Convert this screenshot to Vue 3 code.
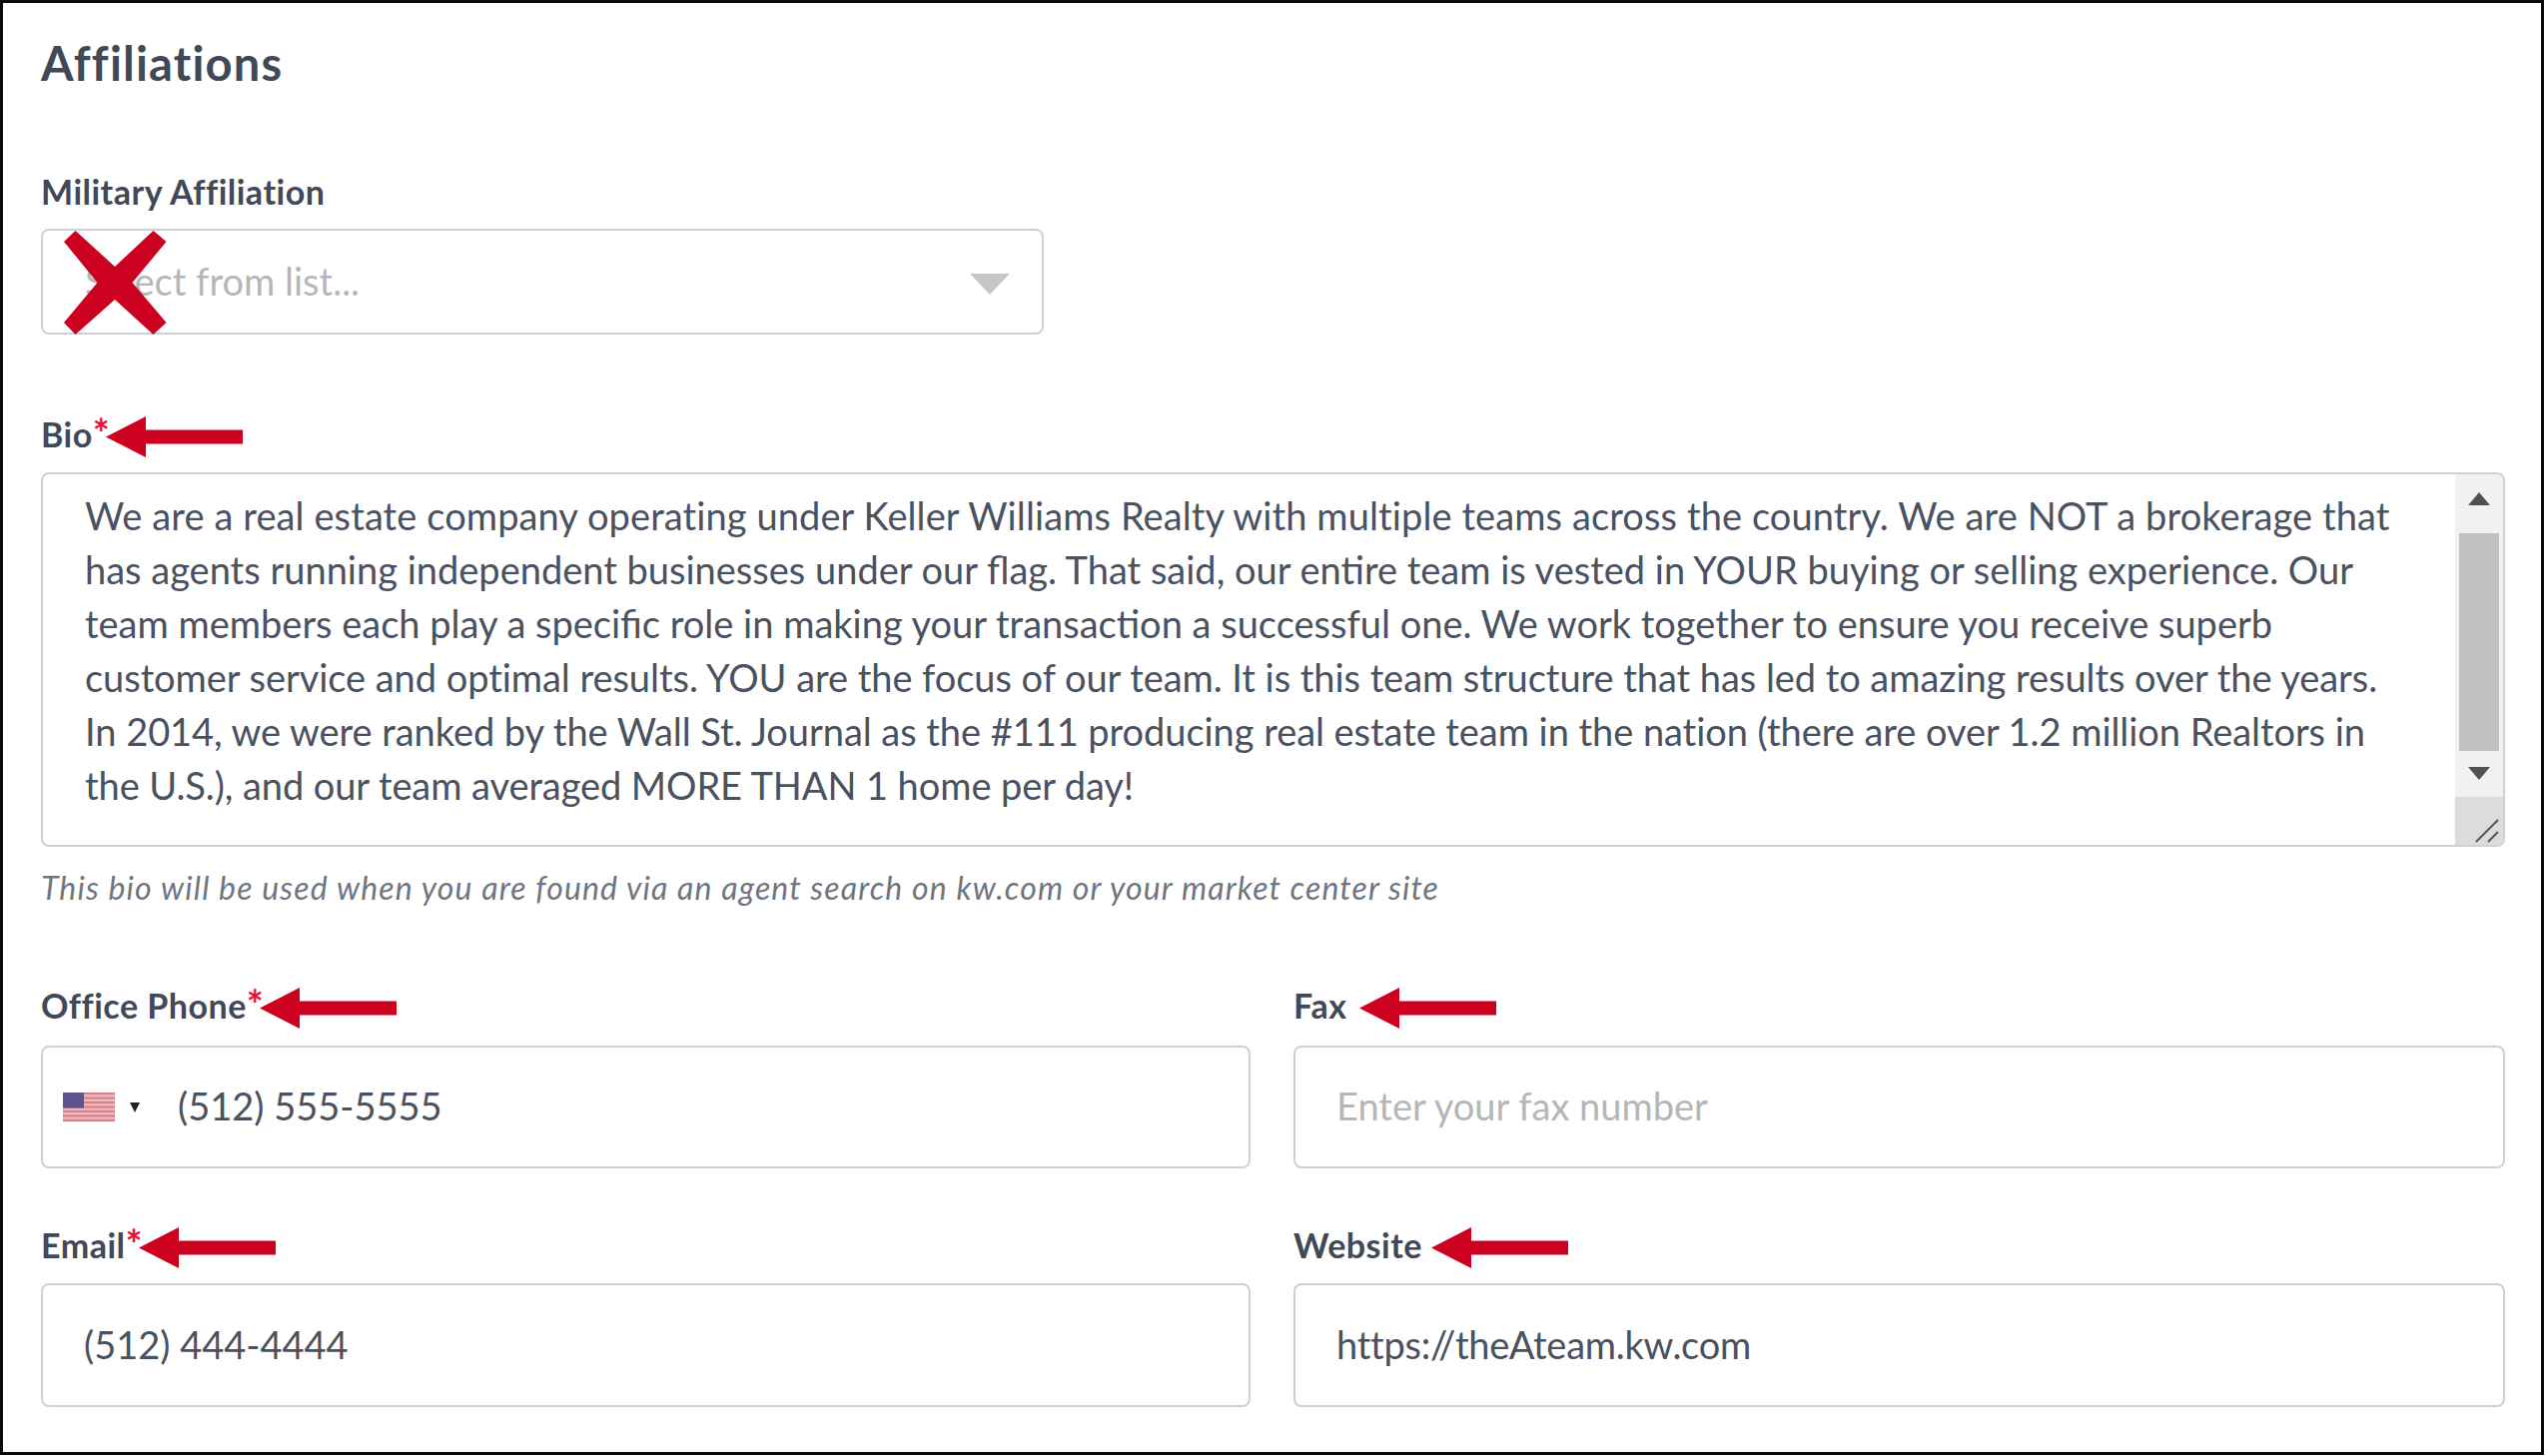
<script setup>
const bio = [
  { text: 'We are a real estate company operating under Keller Williams Realty with multiple teams across the country. We are NOT a brokerage that', ls: 0.1 },
  { text: 'has agents running independent businesses under our flag. That said, our entire team is vested in YOUR buying or selling experience. Our', ls: 0 },
  { text: 'team members each play a specific role in making your transaction a successful one. We work together to ensure you receive superb', ls: 0 },
  { text: 'customer service and optimal results. YOU are the focus of our team. It is this team structure that has led to amazing results over the years.', ls: -0.05 },
  { text: 'In 2014, we were ranked by the Wall St. Journal as the #111 producing real estate team in the nation (there are over 1.2 million Realtors in', ls: -0.05 },
  { text: 'the U.S.), and our team averaged MORE THAN 1 home per day!', ls: -0.08 }
]
const stripes = [0, 2, 4, 6, 8, 10, 12]
</script>

<template>
  <main class="page">
    <h2 class="title">Affiliations</h2>

    <section class="field military">
      <div class="label">Military Affiliation</div>
      <div class="box select">
        <span class="placeholder">Select from list...</span>
        <span class="tri"></span>
        <svg class="cross" width="103" height="104" viewBox="0 0 103 104">
          <path d="M11.500 0 L51 36 L89.500 0 L102.500 11 L68.500 52 L102.500 92 L89.500 104 L51 69 L11.500 104 L0 92 L33.500 52 L0 11 Z" fill="#cc001f" />
        </svg>
      </div>
    </section>

    <section class="field bio">
      <div class="label">
        <span>Bio</span><span class="req">*</span>
        <svg class="arrow" width="137" height="41" viewBox="0 0 137 41"><path d="M0 20.500 L40 0 V13.500 H137 V27.500 H40 V41 Z" /></svg>
      </div>
      <div class="box area">
        <div class="area-text">
          <div v-for="(line, i) in bio" :key="i" class="bio-line" :style="{ letterSpacing: line.ls + 'px' }">{{ line.text }}</div>
        </div>
        <div class="scroll">
          <div class="track">
            <span class="up"></span>
            <span class="thumb"></span>
            <span class="down"></span>
          </div>
          <div class="resizer">
            <svg width="30" height="28" viewBox="0 0 30 28">
              <path d="M3 25 L25 3 M15 25 L25 15" stroke="#555" stroke-width="2" fill="none" />
            </svg>
          </div>
        </div>
      </div>
      <p class="hint">This bio will be used when you are found via an agent search on kw.com or your market center site</p>
    </section>

    <section class="grid">
      <div class="cell">
        <div class="label">
          <span>Office Phone</span><span class="req">*</span>
          <svg class="arrow" width="137" height="41" viewBox="0 0 137 41"><path d="M0 20.500 L40 0 V13.500 H137 V27.500 H40 V41 Z" /></svg>
        </div>
        <div class="box input phone">
          <svg class="flag" width="52" height="29" viewBox="0 0 52 29">
            <rect width="52" height="29" fill="#eebcc2" />
            <rect v-for="s in stripes" :key="s" x="0" :y="s * 2.23" width="52" height="2.23" fill="#d8808c" />
            <rect width="21" height="15.600" fill="#5a5490" />
          </svg>
          <span class="caret"></span>
          <span class="value">(512) 555-5555</span>
        </div>
      </div>
      <div class="cell">
        <div class="label">
          <span>Fax</span>
          <svg class="arrow wide fax" width="137" height="41" viewBox="0 0 137 41"><path d="M0 20.500 L40 0 V13.500 H137 V27.500 H40 V41 Z" /></svg>
        </div>
        <div class="box input upper"><span class="placeholder">Enter your fax number</span></div>
      </div>
      <div class="cell">
        <div class="label">
          <span>Email</span><span class="req">*</span>
          <svg class="arrow" width="137" height="41" viewBox="0 0 137 41"><path d="M0 20.500 L40 0 V13.500 H137 V27.500 H40 V41 Z" /></svg>
        </div>
        <div class="box input lower"><span class="value">(512) 444-4444</span></div>
      </div>
      <div class="cell">
        <div class="label">
          <span>Website</span>
          <svg class="arrow wide" width="137" height="41" viewBox="0 0 137 41"><path d="M0 20.500 L40 0 V13.500 H137 V27.500 H40 V41 Z" /></svg>
        </div>
        <div class="box input lower"><span class="value url">https://theAteam.kw.com</span></div>
      </div>
    </section>
  </main>
</template>

<style>
html, body { margin: 0; background: #fff; }
</style>

<style scoped>
.page {
  box-sizing: border-box;
  width: 2547px;
  height: 1457px;
  border: 3px solid #0b0b0b;
  padding: 32px 36px 0 38px;
  background: #fff;
  overflow: hidden;
  font-family: Lato, "Noto Sans", sans-serif;
  color: #4a5160;
}
.title {
  margin: 0;
  font-size: 47px;
  line-height: 56px;
  font-weight: 700;
  letter-spacing: 1.2px;
  color: #414857;
}
.field.military { margin-top: 81px; }
.field.bio { margin-top: 80px; }
.label {
  box-sizing: border-box;
  display: flex;
  align-items: center;
  height: 40px;
  padding-bottom: 2px;
  font-size: 34px;
  font-weight: 700;
  letter-spacing: 0.5px;
  color: #414857;
  white-space: nowrap;
}
.req {
  color: #e8103a;
  align-self: flex-start;
  font-size: 40px;
  line-height: 38px;
  margin-right: -5px;
}
.arrow { fill: #cc001f; flex: none; margin-left: 1px; margin-top: 6px; }
.arrow.wide { margin-left: 9px; }
.arrow.fax { margin-left: 13px; }
.box {
  box-sizing: border-box;
  border: 2px solid #ccd1d7;
  border-radius: 8px;
  background: #fff;
  margin-top: 17px;
}
.select {
  position: relative;
  width: 1004px;
  height: 106px;
  display: flex;
  align-items: center;
  justify-content: space-between;
  padding: 0 32px 0 42px;
}
.placeholder { font-size: 38px; line-height: 46px; margin-top: -2px; color: #b6b6b8; }
.tri {
  width: 0;
  height: 0;
  margin-top: 4px;
  border-left: 20px solid transparent;
  border-right: 20px solid transparent;
  border-top: 21px solid #c6c6c6;
}
.cross { position: absolute; left: 21px; top: 0; }
.area {
  display: flex;
  height: 375px;
  margin-top: 18px;
  overflow: hidden;
}
.area-text {
  flex: 1;
  min-width: 0;
  padding: 14px 0 0 42px;
}
.bio-line {
  font-size: 38px;
  line-height: 54px;
  white-space: nowrap;
  color: #4a5160;
}
.scroll {
  width: 48px;
  flex: none;
  display: flex;
  flex-direction: column;
  background: #f1f1f1;
}
.track {
  flex: 1;
  display: flex;
  flex-direction: column;
  align-items: center;
  padding-top: 18px;
}
.up, .down {
  width: 0;
  height: 0;
  border-left: 11px solid transparent;
  border-right: 11px solid transparent;
}
.up { border-bottom: 13px solid #505050; }
.down { border-top: 13px solid #505050; }
.thumb { width: 40px; height: 218px; margin: 28px 0 16px; background: #c1c1c1; }
.resizer {
  height: 48px;
  background: #dcdcdc;
  display: flex;
  align-items: flex-end;
  justify-content: flex-end;
}
.hint {
  margin: 21px 0 0;
  font-size: 32px;
  line-height: 40px;
  letter-spacing: 1.13px;
  font-style: italic;
  color: #70757f;
}
.grid {
  display: grid;
  grid-template-columns: 1211px 1213px;
  column-gap: 43px;
  row-gap: 57px;
  margin-top: 78px;
}
.input {
  height: 123px;
  display: flex;
  align-items: center;
  padding: 0 41px;
  margin-top: 20px;
}
.input.lower { height: 124px; margin-top: 18px; }
.lower .value { margin-top: -2px; }
.upper .placeholder,
.phone .value { margin-top: -4px; }
.phone { padding-left: 20px; }
.flag { flex: none; }
.caret {
  width: 0;
  height: 0;
  margin-left: 15px;
  margin-right: 38px;
  border-left: 5px solid transparent;
  border-right: 5px solid transparent;
  border-top: 10px solid #222;
}
.value { font-size: 38px; color: #4a5160; }
.value.url { letter-spacing: -0.25px; }
</style>
